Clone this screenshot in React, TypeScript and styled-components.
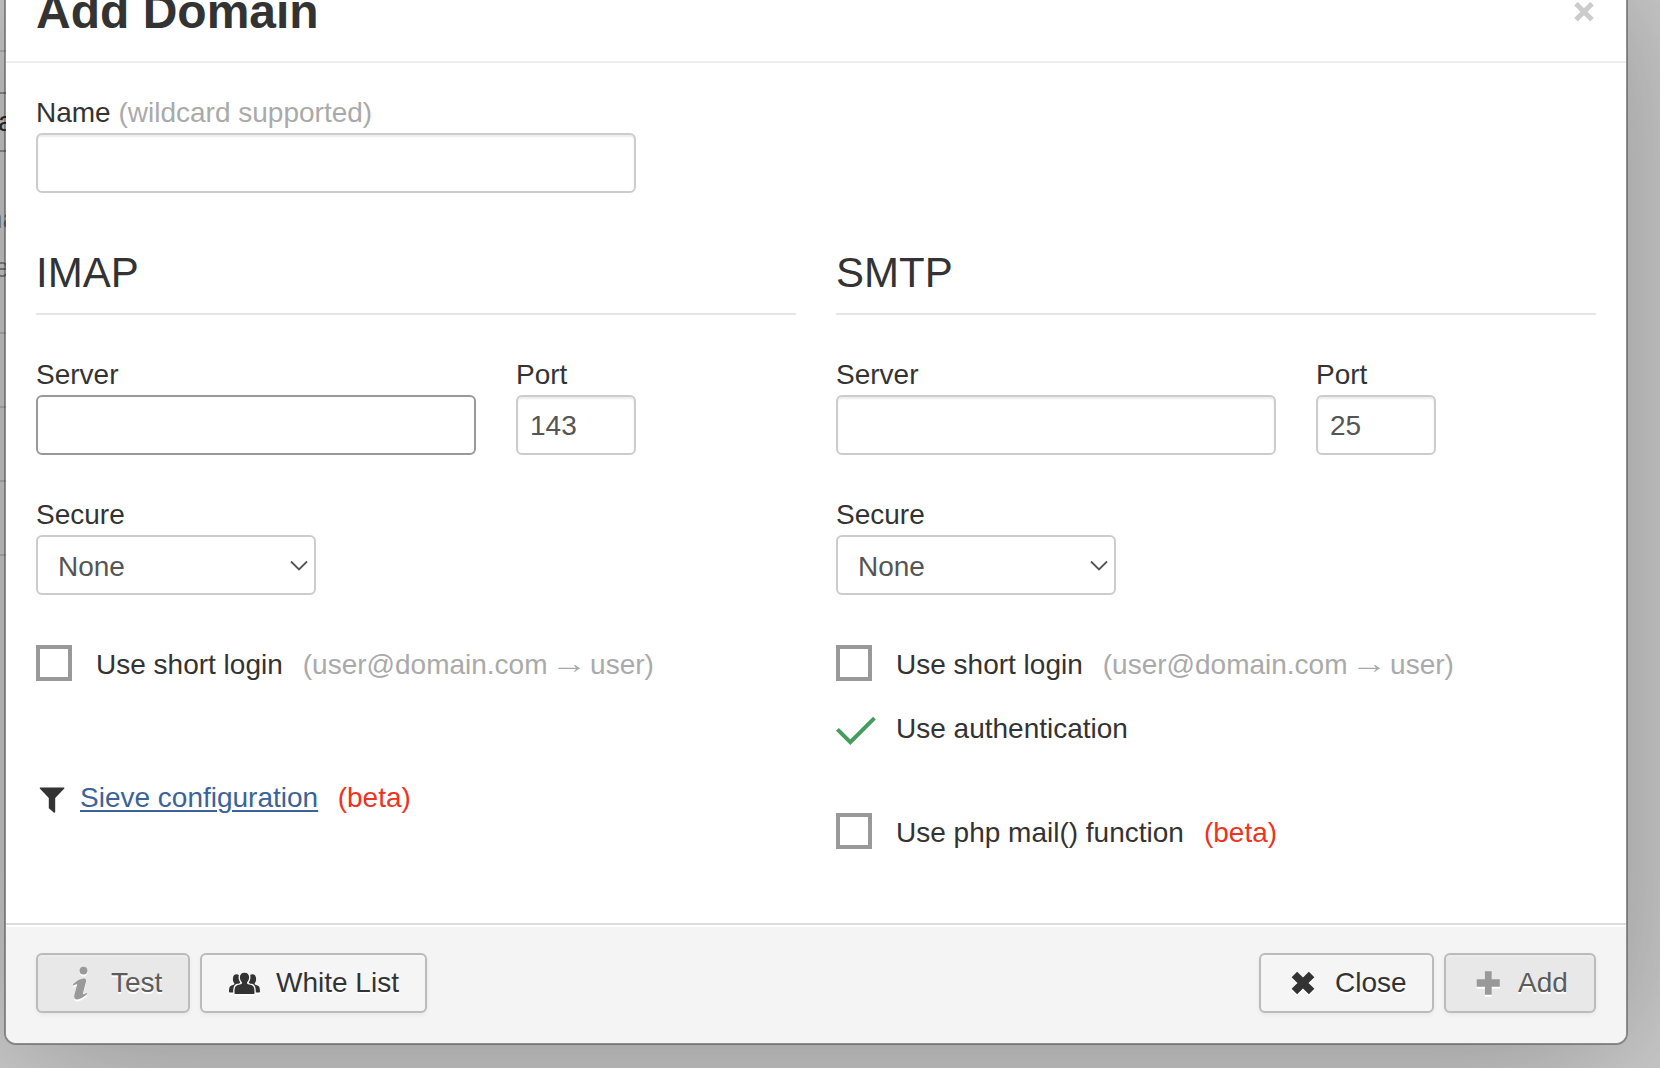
import React from "react";
import styled, { createGlobalStyle, css } from "styled-components";

const GlobalStyle = createGlobalStyle`
  * { box-sizing: border-box; }
  html, body { margin: 0; padding: 0; overflow: hidden; }
  body {
    font-family: "Liberation Sans", Arial, Helvetica, sans-serif;
    font-size: 28px;
    line-height: 40px;
    color: #333;
    -webkit-font-smoothing: antialiased;
  }
  input, select, button { font: inherit; margin: 0; }
`;

const Backdrop = styled.div`
  position: relative;
  width: 1660px;
  height: 1068px;
  overflow: hidden;
  background: #cccccc;
`;

const Behind = styled.div`
  position: absolute;
  left: 0;
  top: 0;
  width: 6px;
  height: 1068px;
  overflow: hidden;
`;

const Rule = styled.i<{ $y: number; $dark?: boolean }>`
  position: absolute;
  left: 0;
  top: ${(p) => p.$y}px;
  width: 6px;
  height: 2px;
  background: ${(p) => (p.$dark ? "#8c8c8c" : "#b0b0b0")};
`;

const Sliver = styled.span<{ $y: number; $x: number; $bold?: boolean }>`
  position: absolute;
  left: ${(p) => p.$x}px;
  top: ${(p) => p.$y}px;
  white-space: nowrap;
  color: ${(p) => (p.$bold ? "#2b2b2b" : "#7c7c7c")};
`;

const Modal = styled.section`
  position: absolute;
  left: 4px;
  top: -34px;
  width: 1624px;
  height: 1079px;
  display: flex;
  flex-direction: column;
  background: #fff;
  background-clip: padding-box;
  border: 2px solid rgba(0, 0, 0, 0.3);
  border-radius: 12px;
  box-shadow: 0 10px 160px rgba(0, 0, 0, 0.3);
  overflow: hidden;
`;

const Header = styled.header`
  display: flex;
  flex: none;
  justify-content: space-between;
  height: 95px;
  padding: 14px 30px 0;
  border-bottom: 2px solid #eee;
`;

const Title = styled.h3`
  margin: 0;
  font-size: 48px;
  line-height: 60px;
  font-weight: 700;
`;

const CloseX = styled.button`
  display: flex;
  width: 24px;
  height: 20px;
  margin-top: 20px;
  padding: 0;
  justify-content: center;
  border: 0;
  background: none;
  color: #ccc;
`;

const Body = styled.main`
  flex: 1;
  padding: 30px 30px 0;
`;

const Columns = styled.div`
  display: flex;
  gap: 40px;
  margin-top: 40px;
`;

const Column = styled.div`
  width: 760px;
`;

const Legend = styled.h4`
  height: 82px;
  margin: 0 0 40px;
  font-size: 42px;
  line-height: 80px;
  font-weight: 400;
  border-bottom: 2px solid #e5e5e5;
`;

const FieldRow = styled.div`
  display: flex;
  gap: 40px;
  margin-bottom: 40px;
`;

const Field = styled.label<{ $width: number }>`
  display: flex;
  flex-direction: column;
  width: ${(p) => p.$width}px;
`;

const Hint = styled.span`
  color: #aaa;
`;

const Arrow = styled.span`
  display: inline-block;
  margin-right: -1px;
  line-height: 1;
  transform: translateY(-1px) scaleX(1.3);
`;

const Beta = styled.span`
  color: #ee3322;
`;

const TextInput = styled.input<{ $active?: boolean }>`
  width: 100%;
  height: 60px;
  padding: 9px 12px 7px;
  color: #555;
  background: #fff;
  border: 2px solid ${(p) => (p.$active ? "#999" : "#ccc")};
  border-radius: 6px;
  outline: 0;
  box-shadow: ${(p) => (p.$active ? "none" : "inset 0 2px 2px rgba(0, 0, 0, 0.075)")};
`;

const SelectBox = styled.div`
  display: flex;
  align-items: center;
  justify-content: space-between;
  height: 60px;
  padding: 3px 5px 0 20px;
  color: #555;
  border: 2px solid #ccc;
  border-radius: 6px;
`;

const Options = styled.div`
  margin-top: 50px;
`;

const Option = styled.div<{ $space?: number }>`
  display: flex;
  align-items: center;
  height: 40px;
  margin-bottom: ${(p) => p.$space ?? 0}px;
`;

const Mark = styled.span`
  display: flex;
  width: 60px;
  height: 36px;
  margin-top: -4px;
`;

const Box = styled.span`
  width: 36px;
  height: 36px;
  border: 4px solid #999;
`;

const OptionText = styled.span`
  margin-right: 20px;
  white-space: nowrap;
`;

const SieveRow = styled.div`
  display: flex;
  align-items: center;
  height: 40px;
  margin-top: 93px;
`;

const SieveLink = styled.a`
  margin: 0 19.5px 0 14px;
  color: #3b6399;
  text-decoration: underline;
  text-decoration-thickness: 2px;
  text-underline-offset: 3px;
`;

const Footer = styled.footer`
  display: flex;
  flex: none;
  justify-content: space-between;
  height: 120px;
  padding: 28px 30px 0;
  background: #f4f4f4;
  border-top: 2px solid #ddd;
  box-shadow: inset 0 2px 0 #fff;
`;

const Group = styled.div`
  display: flex;
  gap: 10px;
`;

const Button = styled.button<{ $width: number; $pad: number; $off?: boolean }>`
  display: flex;
  align-items: center;
  width: ${(p) => p.$width}px;
  height: 60px;
  padding: 0 0 1px ${(p) => p.$pad}px;
  color: #333;
  background: #f5f5f5;
  border: 2px solid #bbb;
  border-radius: 6px;
  text-shadow: 0 2px 0 #fff;
  box-shadow: inset 0 2px 0 rgba(255, 255, 255, 0.2), 0 2px 4px rgba(0, 0, 0, 0.05);
  ${(p) =>
    p.$off &&
    css`
      color: #5c5c5c;
      background: #e8e8e8;
    `}
`;

const ButtonIcon = styled.span<{ $gap: number; $off?: boolean }>`
  display: flex;
  margin-right: ${(p) => p.$gap}px;
  padding-top: 1px;
  color: ${(p) => (p.$off ? "#999" : "#333")};
  filter: drop-shadow(0 2px 0 #fff);
`;

const Chevron = () => (
  <svg width="20" height="14" viewBox="0 0 20 14" fill="none">
    <path d="M2 1.500 10 9.500 18 1.500" stroke="#555" strokeWidth="1.800" />
  </svg>
);

const Cross = () => (
  <svg width="20" height="20" viewBox="0 0 20 20">
    <path d="M2 1.700 18 17.700M18 1.700 2 17.700" stroke="currentColor" strokeWidth="5" />
  </svg>
);

const CheckMark = () => (
  <svg width="42" height="38" viewBox="0 0 42 38" fill="none">
    <path d="M1.400 20.300 14.300 33.200 38.400 9.200" stroke="#449d5c" strokeWidth="4" />
  </svg>
);

const Funnel = () => (
  <svg width="30" height="34" viewBox="0 0 30 34">
    <path
      d="M4.200 6.400h23.700q1 .3.400 1.200L19.200 17V31q-.4 1-1.400.4L12.800 27.200V17L3.800 7.600Q3.300 6.700 4.200 6.400Z"
      fill="#333"
    />
  </svg>
);

const InfoIcon = () => (
  <svg width="18" height="34" viewBox="0 0 18 34" fill="currentColor">
    <circle cx="11.500" cy="4.600" r="3.900" />
    <path d="M1 18.300C4.600 14.800 8.800 12.400 12 12.500 13.900 12.600 14.500 14 13.900 16.300L11 27.300C10.700 28.600 11.400 28.600 14.900 26.900L15.200 28C11.300 31.500 7.300 33.700 4.600 33.400 2.200 33.100 1.800 31.300 2.400 29L5 19.300C5.400 17.600 4.800 17.900 1.300 19.500Z" />
  </svg>
);

const SIDE_FIGURE =
  "M8.500 3.200c1 0 1.800.3 2.300.9-.6 2.600-.1 5.300 1.500 7.300-.4.9-1.600 1-3 1.400-2.900.8-4 2.400-4.200 8.700H1.800c-.5 0-.8-.3-.8-.8.1-4.700.7-5.800 3.300-6.500 1-.3 1.700-.5 2-1v-1c-.9-.8-1.400-2.200-1.400-4.200 0-3 1.300-4.800 3.600-4.800Z";

const UsersIcon = () => (
  <svg width="33" height="24" viewBox="0 0 33 24" fill="currentColor">
    <path d={SIDE_FIGURE} />
    <path d={SIDE_FIGURE} transform="translate(33 0) scale(-1 1)" />
    <path d="M16.500 1.700c3 0 4.600 1.900 4.600 4.600 0 2.100-.8 3.800-2 4.900v1.300c.5.8 1.600 1 3 1.300 3.400.8 4.400 1.600 4.400 8.400 0 .5-.3.800-.8.800H7.300c-.5 0-.8-.3-.8-.8 0-6.800 1-7.600 4.400-8.400 1.400-.3 2.500-.5 3-1.300v-1.300c-1.200-1.100-2-2.800-2-4.900 0-2.700 1.600-4.600 4.600-4.600Z" />
  </svg>
);

const HeavyCross = () => (
  <svg width="24" height="24" viewBox="0 0 24 24">
    <path d="M3.400 3.400 20.600 20.600M20.600 3.400 3.400 20.600" stroke="currentColor" strokeWidth="7.800" />
  </svg>
);

const Plus = () => (
  <svg width="24" height="24" viewBox="0 0 24 24" fill="currentColor">
    <path d="M8.900.2h6.800v8h8.100v7.600H15.700v8H8.900v-8H.7V8.200H8.900Z" />
  </svg>
);

type CheckOptionProps = {
  label: string;
  checked?: boolean;
  space?: number;
  children?: React.ReactNode;
};

const CheckOption = ({ label, checked, space, children }: CheckOptionProps) => (
  <Option $space={space}>
    <Mark>{checked ? <CheckMark /> : <Box />}</Mark>
    <OptionText>{label}</OptionText>
    {children}
  </Option>
);

type ServerFieldsProps = { title: string; port: string; active?: boolean };

const ServerFields = ({ title, port, active }: ServerFieldsProps) => (
  <>
    <Legend>{title}</Legend>
    <FieldRow>
      <Field $width={440}>
        Server
        <TextInput $active={active} />
      </Field>
      <Field $width={120}>
        Port
        <TextInput defaultValue={port} />
      </Field>
    </FieldRow>
    <Field as="div" $width={280}>
      Secure
      <SelectBox>
        None
        <Chevron />
      </SelectBox>
    </Field>
  </>
);

const LoginHint = () => (
  <Hint>
    (user@domain.com <Arrow>→</Arrow> user)
  </Hint>
);

export default function App() {
  return (
    <>
      <GlobalStyle />
      <Backdrop>
        <Behind>
          <Rule $y={50} />
          <Rule $y={92} $dark />
          <Rule $y={150} $dark />
          {[332, 406, 480, 554].map((y) => (
            <Rule key={y} $y={y} />
          ))}
          <Sliver $x={-2} $y={102} $bold>a</Sliver>
          <Sliver $x={-13} $y={199}>na</Sliver>
          <Sliver $x={-6} $y={248}>e</Sliver>
        </Behind>
        <Modal>
          <Header>
            <Title>Add Domain</Title>
            <CloseX aria-label="Close">
              <Cross />
            </CloseX>
          </Header>
          <Body>
            <Field $width={600}>
              <span>
                Name <Hint>(wildcard supported)</Hint>
              </span>
              <TextInput />
            </Field>
            <Columns>
              <Column>
                <ServerFields title="IMAP" port="143" active />
                <Options>
                  <CheckOption label="Use short login">
                    <LoginHint />
                  </CheckOption>
                </Options>
                <SieveRow>
                  <Funnel />
                  <SieveLink>Sieve configuration</SieveLink>
                  <Beta>(beta)</Beta>
                </SieveRow>
              </Column>
              <Column>
                <ServerFields title="SMTP" port="25" />
                <Options>
                  <CheckOption label="Use short login" space={24}>
                    <LoginHint />
                  </CheckOption>
                  <CheckOption label="Use authentication" checked space={64} />
                  <CheckOption label="Use php mail() function">
                    <Beta>(beta)</Beta>
                  </CheckOption>
                </Options>
              </Column>
            </Columns>
          </Body>
          <Footer>
            <Group>
              <Button $width={154} $pad={34} $off>
                <ButtonIcon $gap={21} $off>
                  <InfoIcon />
                </ButtonIcon>
                Test
              </Button>
              <Button $width={227} $pad={26}>
                <ButtonIcon $gap={15}>
                  <UsersIcon />
                </ButtonIcon>
                White List
              </Button>
            </Group>
            <Group>
              <Button $width={175} $pad={30}>
                <ButtonIcon $gap={20}>
                  <HeavyCross />
                </ButtonIcon>
                Close
              </Button>
              <Button $width={152} $pad={30} $off>
                <ButtonIcon $gap={18} $off>
                  <Plus />
                </ButtonIcon>
                Add
              </Button>
            </Group>
          </Footer>
        </Modal>
      </Backdrop>
    </>
  );
}
